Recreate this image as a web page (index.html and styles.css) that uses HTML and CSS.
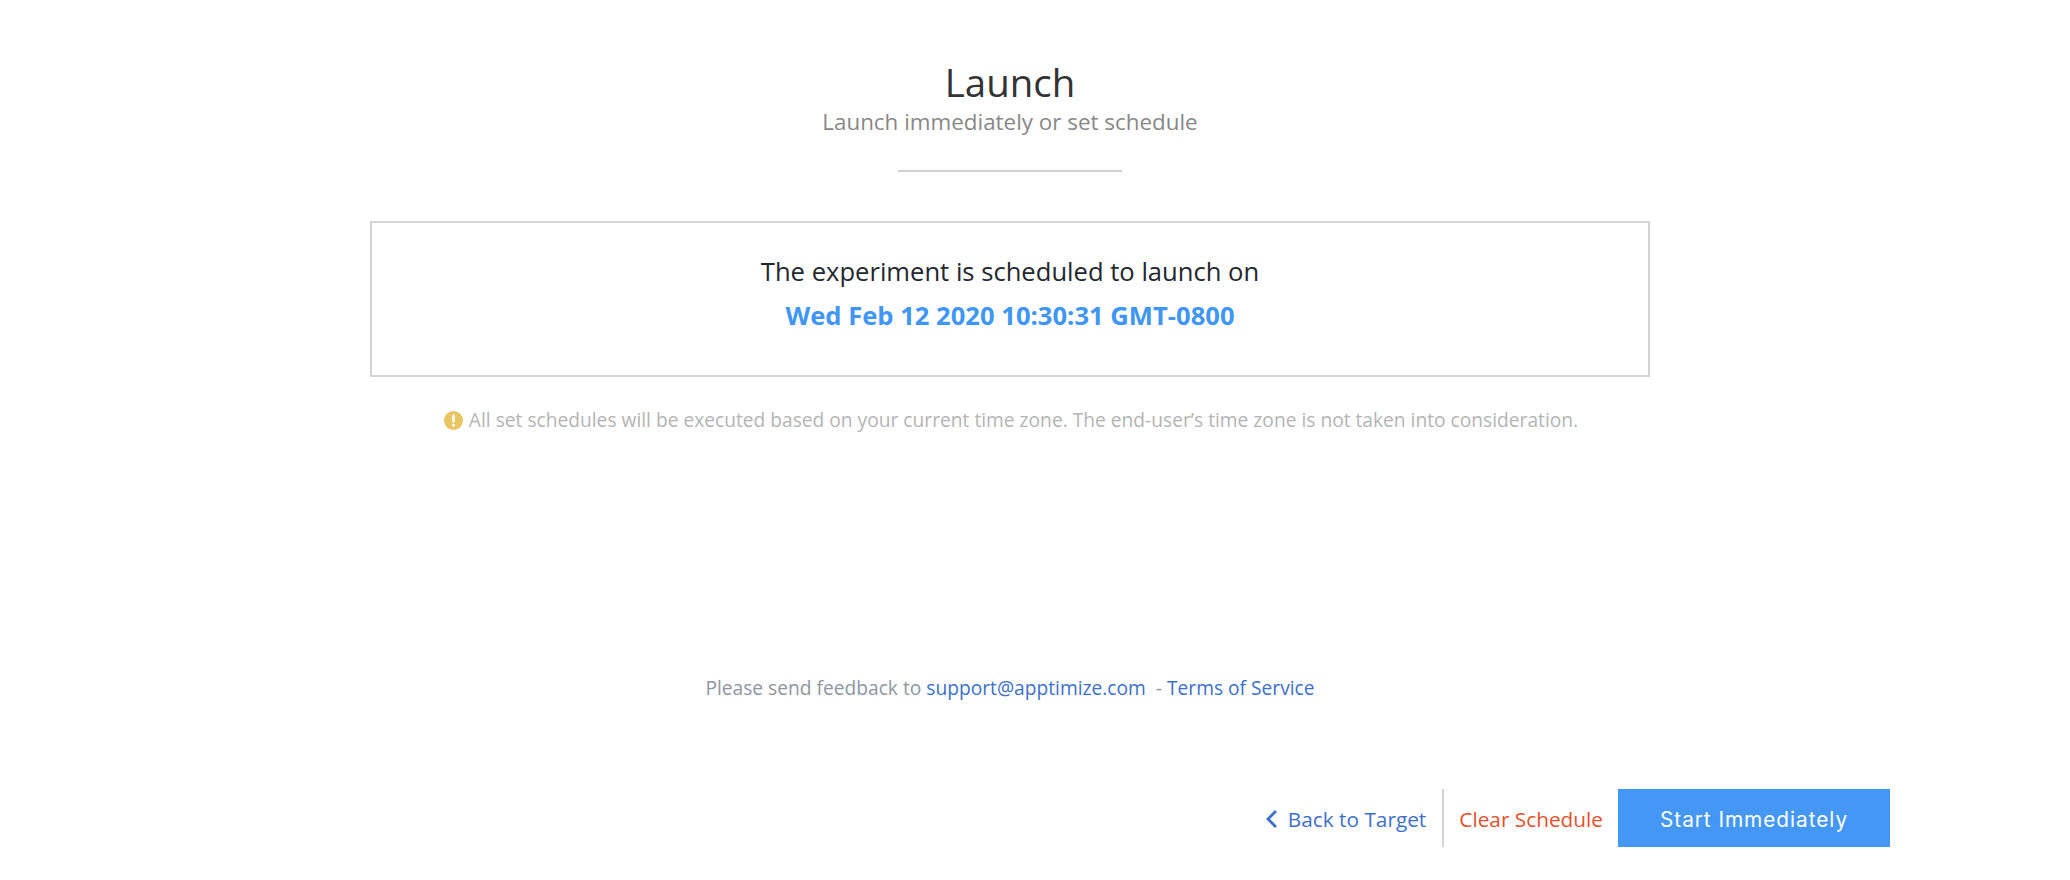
FILE: index.html
```html
<!DOCTYPE html>
<html lang="en">
<head>
<meta charset="utf-8">
<title>Launch</title>
<link rel="stylesheet" href="styles.css">
</head>
<body>
<main class="page">
  <header class="head">
    <h1 class="title">Launch</h1>
    <p class="subtitle">Launch immediately or set schedule</p>
    <hr class="rule">
  </header>
  <section class="box">
    <p class="box-text">The experiment is scheduled to launch on</p>
    <p class="box-date">Wed Feb 12 2020 10:30:31 GMT-0800</p>
  </section>
  <p class="note">
    <svg class="note-icon" viewBox="0 0 20 20" aria-hidden="true"><circle cx="10" cy="10" r="10" fill="#e9c462"/><rect x="8.6" y="3.6" width="2.8" height="8.6" rx="1.3" fill="#fff"/><circle cx="10" cy="15" r="1.5" fill="#fff"/></svg>
    All set schedules will be executed based on your current time zone. The end-user’s time zone is not taken into consideration.
  </p>
  <p class="feedback">Please send feedback to <a href="#">support@apptimize.com</a>&nbsp; - <a href="#">Terms of Service</a></p>
  <nav class="actions">
    <a class="back" href="#"><svg class="chev" viewBox="0 0 12 18" aria-hidden="true"><path d="M11 1 3 9l8 8" fill="none" stroke="#3e6fcb" stroke-width="2.8"/></svg>Back to Target</a>
    <span class="sep"></span>
    <a class="clear" href="#">Clear Schedule</a>
    <button class="start" type="button">Start Immediately</button>
  </nav>
</main>
</body>
</html>
```

FILE: styles.css
```css
* { box-sizing: border-box; }
html, body { margin: 0; background: #fff; }
body { font-family: "Open Sans", sans-serif; height: 880px; overflow: hidden; }
.page { display: flex; flex-direction: column; align-items: center; width: 2020px; padding-top: 54px; }
.head { display: flex; flex-direction: column; align-items: center; }
.title { margin: 0; font-size: 38.4px; line-height: 56px; font-weight: 400; color: #333; }
.subtitle { margin: -3px 0 0; font-size: 22.4px; line-height: 30px; color: #888; }
.rule { width: 224px; height: 2px; margin: 33px 0 0; border: 0; background: #d0d0d0; }
.box { width: 1280px; height: 156px; margin-top: 49px; padding-top: 31px; border: 2px solid #d4d4d4; text-align: center; }
.box-text { margin: 0; font-size: 25.6px; line-height: 36px; color: #23272e; }
.box-date { margin: 8px 0 0; font-size: 25.6px; line-height: 36px; font-weight: 700; color: #4096f5; }
.note { display: flex; align-items: center; justify-content: center; gap: 6px; margin: 30px 0 0; padding-left: 2px; font-size: 19.2px; line-height: 26px; color: #b4b4b4; }
.note-icon { width: 19px; height: 19px; flex: none; }
.feedback { margin: 242px 0 0; font-size: 19.2px; line-height: 26px; color: #8e96a3; }
.feedback a { color: #3e6fcb; text-decoration: none; }
.actions { display: flex; align-items: center; align-self: flex-end; height: 58px; margin: 88px 130px 0 0; font-size: 20.8px; }
.back { display: flex; align-items: center; gap: 11px; padding-top: 2px; color: #3e6fcb; text-decoration: none; }
.chev { width: 12px; height: 18px; }
.sep { width: 2px; height: 58px; margin: 0 15px 0 16px; background: #d4d4d4; }
.clear { margin-right: 15px; padding-top: 2px; color: #e4512b; text-decoration: none; }
.start { width: 272px; height: 58px; padding: 2px 0 0; border: 0; background: #4497f5; color: #fff; font-family: Inter, sans-serif; font-size: 20.8px; letter-spacing: 0.95px; }
```
